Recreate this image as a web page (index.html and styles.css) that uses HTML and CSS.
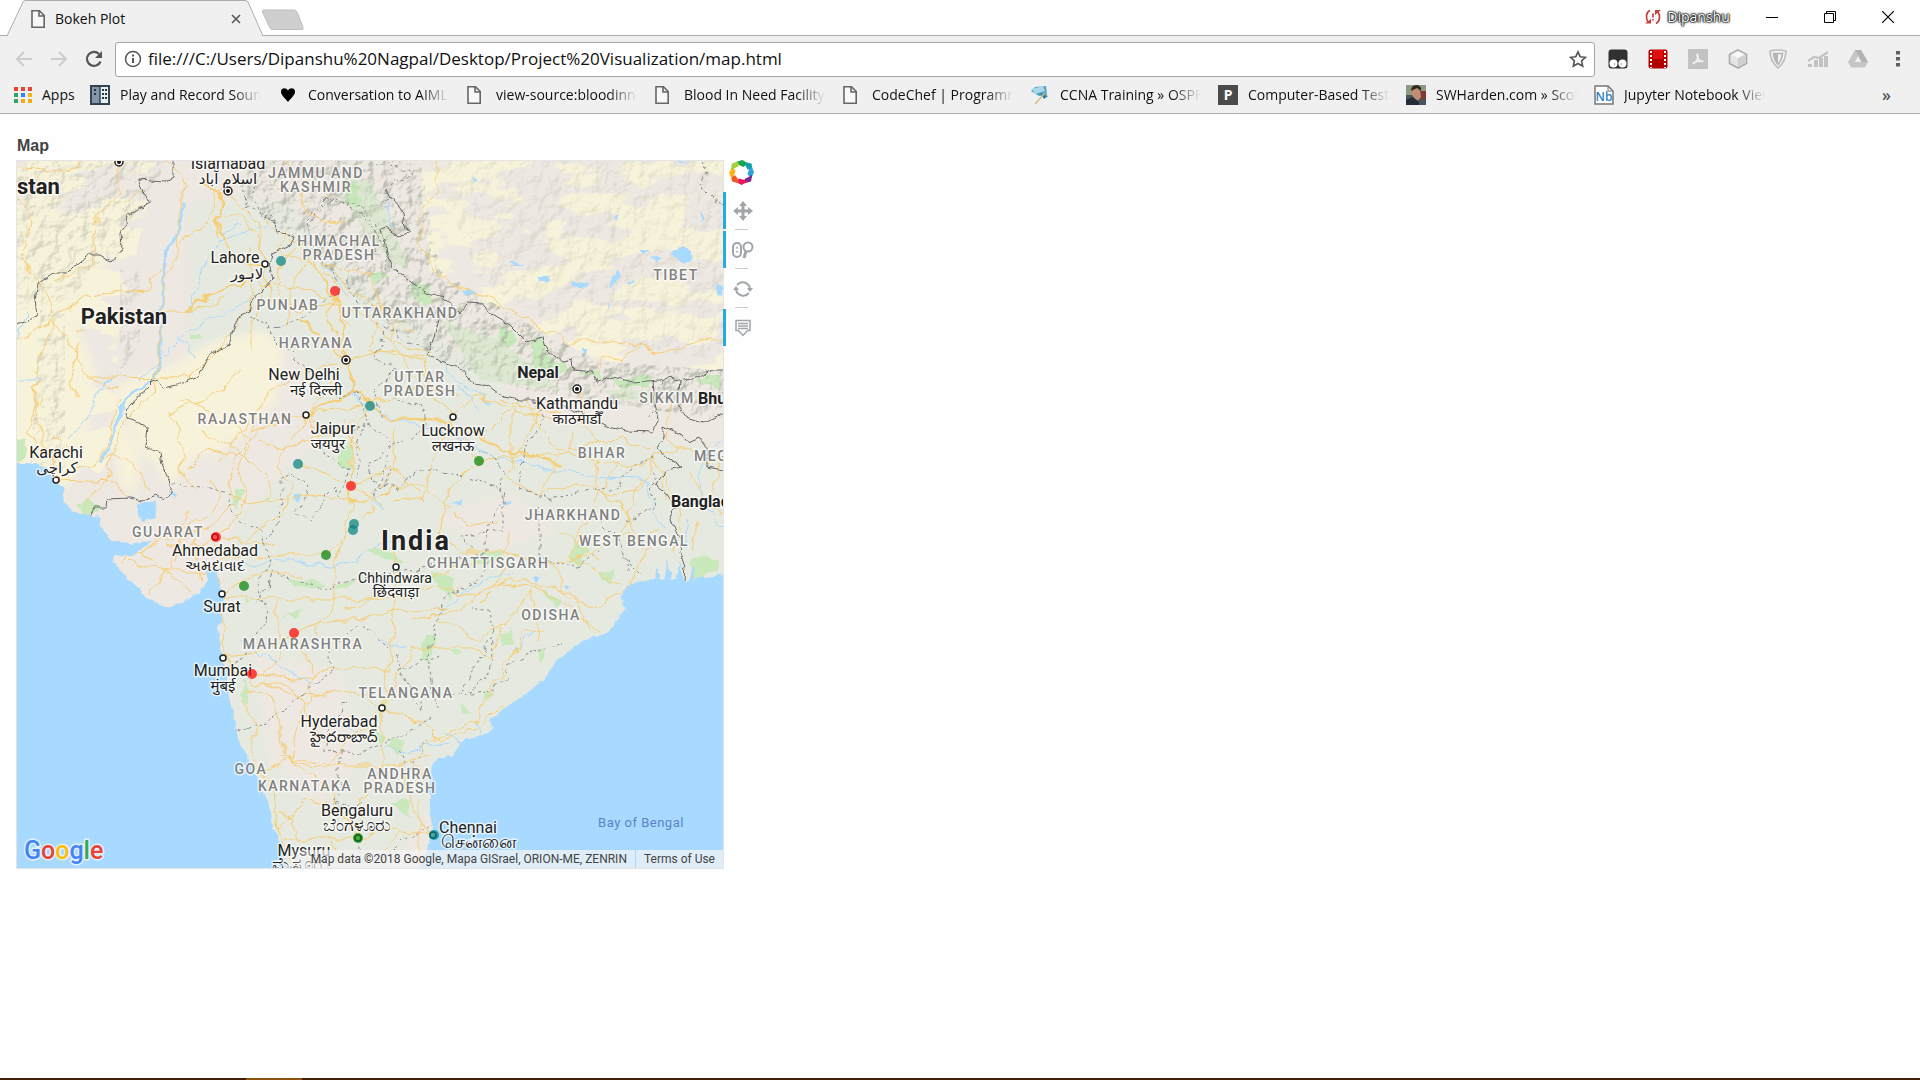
FILE: index.html
```html
<!DOCTYPE html>
<html lang="en">
<head>
<meta charset="utf-8">
<title>Bokeh Plot</title>
<link rel="stylesheet" href="styles.css">
</head>
<body>
<svg class="defs" width="0" height="0" aria-hidden="true">
  <symbol id="page" viewBox="0 0 16 20"><path d="M2 1.800h7.500l4.700 4.700v11.700H2zM9 2v5h5" fill="#fff" fill-opacity=".5" stroke="#666" stroke-width="1.600"/></symbol>
</svg>

<header class="browser">
  <div class="titlebar">
    <div class="tab">
      <svg class="tab-shape" width="257" height="36" viewBox="0 0 257 36" aria-hidden="true"><path d="M0 36 16 2Q17 .5 19 .5H238Q240 .5 241 2L256 36" fill="#f0f0f0" stroke="#adadad"/></svg>
      <svg class="tab-icon" width="16" height="20"><use href="#page"/></svg>
      <span class="tab-title">Bokeh Plot</span>
      <button class="tab-close" aria-label="Close tab"><svg width="10" height="10" viewBox="0 0 10 10"><path d="M1 1l8 8M9 1 1 9" stroke="#555" stroke-width="1.600"/></svg></button>
    </div>
    <button class="new-tab" aria-label="New tab"><svg width="44" height="22" viewBox="0 0 44 22"><path d="M2.500 1H33Q35 1 36 3l6 15q.6 2.500-1 2.500H11.500Q9.500 20.500 9 19L1.500 3Q1 1 2.500 1z" fill="#cfcfcf" stroke="#bdbdbd"/></svg></button>
    <div class="window-controls">
      <svg width="16" height="16" viewBox="0 0 16 16" aria-hidden="true"><g fill="none" stroke="#c5403a" stroke-width="1.700"><path d="M5 1.500C1 3 .5 9 3 13M11 14.500c4-2 4.500-8 2-11.500"/><path d="M8 4.500v4M8 10v1.500"/></g><path d="M0 14.500h6V10zM16 1h-6v5z" fill="#c5403a"/></svg>
      <button class="profile">Dipanshu</button>
      <button class="win" aria-label="Minimize"><svg width="12" height="12" viewBox="0 0 12 12"><path d="M0 6.500h12" stroke="#000"/></svg></button>
      <button class="win" aria-label="Restore"><svg width="12" height="12" viewBox="0 0 12 12"><path d="M.5 2.500h9v9h-9zM2.500 2.500v-2h9v9h-2" fill="none" stroke="#000"/></svg></button>
      <button class="win" aria-label="Close"><svg width="12" height="12" viewBox="0 0 12 12"><path d="M0 0l12 12M12 0 0 12" stroke="#000" stroke-width="1.200"/></svg></button>
    </div>
  </div>

  <div class="toolbar">
    <button class="nav" aria-label="Back"><svg width="18" height="18" viewBox="0 0 18 18"><path d="M17 9H2M9 2 2 9l7 7" fill="none" stroke="#ccc" stroke-width="2"/></svg></button>
    <button class="nav" aria-label="Forward"><svg width="18" height="18" viewBox="0 0 18 18"><path d="M1 9h15M9 2l7 7-7 7" fill="none" stroke="#ccc" stroke-width="2"/></svg></button>
    <button class="nav" aria-label="Reload"><svg width="18" height="18" viewBox="0 0 18 18"><path d="M15.500 11.500A7 7 0 1 1 14 4" fill="none" stroke="#555" stroke-width="2.200"/><path d="M17 1v7h-7z" fill="#555"/></svg></button>
    <div class="address">
      <svg width="18" height="18" viewBox="0 0 18 18" aria-hidden="true"><circle cx="9" cy="9" r="7.500" fill="none" stroke="#555" stroke-width="1.500"/><path d="M9 8v5M9 4.500v2" stroke="#555" stroke-width="2"/></svg>
      <input class="url" aria-label="Address" value="file:///C:/Users/Dipanshu%20Nagpal/Desktop/Project%20Visualization/map.html">
      <button class="star" aria-label="Bookmark this page"><svg width="18" height="18" viewBox="0 0 18 18"><path d="m9 1.800 2.200 4.900 5.300.6-3.900 3.600 1.100 5.300L9 13.500l-4.700 2.700 1.100-5.300L1.500 7.300l5.300-.6z" fill="none" stroke="#555" stroke-width="1.600"/></svg></button>
    </div>
    <div class="extensions">
      <button class="ext" aria-label="Tampermonkey"><svg width="20" height="20" viewBox="0 0 20 20"><rect x=".5" y=".5" width="19" height="19" rx="3" fill="#303030"/><circle cx="5.500" cy="14.500" r="4" fill="#fff"/><circle cx="14.500" cy="14.500" r="4" fill="#fff"/><circle cx="6.500" cy="15" r="1" fill="#bbb"/><circle cx="13.500" cy="15" r="1" fill="#bbb"/></svg></button>
      <button class="ext" aria-label="Video downloader"><svg width="20" height="20" viewBox="0 0 20 20"><rect x=".5" y=".5" width="19" height="19" rx="2" fill="#b80000"/><path d="M5 1h10v9H5z" fill="#e01010"/><path d="M5 10h10v9H5z" fill="#b00000"/><path d="M3 2v17M17 2v17" stroke="#fff" stroke-width="2" stroke-dasharray="2 2"/></svg></button>
      <button class="ext" aria-label="PDF"><svg width="20" height="20" viewBox="0 0 20 20"><path d="M0 0h20v20H0z" fill="#c2c2c2"/><path d="M5 15c4-2 6-7 4.500-10.500M9 5c0 5 3 7 6 7.500M4.500 14.500C8 12 11 12 15.500 12.500" fill="none" stroke="#f4f4f4" stroke-width="1.500"/></svg></button>
      <button class="ext" aria-label="Cube"><svg width="20" height="20" viewBox="0 0 20 20"><path d="m10 1 8.500 4.500v9L10 19l-8.500-4.500v-9z" fill="#e4e4e4" stroke="#aaa" stroke-width="1.600"/><path d="m10 9 7-3.500v8.500l-7 4z" fill="#cfcfcf"/><path d="m10 9-7-3.500L10 2l7 3.500z" fill="#f8f8f8"/></svg></button>
      <button class="ext" aria-label="Shield"><svg width="20" height="20" viewBox="0 0 20 20"><path d="M10 1c3 0 5 .2 8 1-.2 8-3 13-8 17C5 15 2.200 10 2 2c3-.8 5-1 8-1z" fill="#f2f2f2" stroke="#bbb" stroke-width="1.600"/><path d="M10 4.500h4.500C14 10 13 12 10 15.500 7 12 6 10 5.500 4.500z" fill="none" stroke="#b5b5b5" stroke-width="1.600"/><path d="M10 5v10C7 12 6 9 6 5z" fill="#b5b5b5"/></svg></button>
      <button class="ext" aria-label="Analytics"><svg width="20" height="20" viewBox="0 0 20 20"><path d="M0 15h4v3H0zM6 11h4v7H6zM11 9h4v9h-4zM16 7h4v11h-4z" fill="#c2c2c2"/><path d="m0 12 6-4 5 1 9-6" fill="none" stroke="#c2c2c2" stroke-width="2.200"/></svg></button>
      <button class="ext" aria-label="Drive"><svg width="20" height="20" viewBox="0 0 20 20"><path d="M7 1h6l7 12-3 5.500H3L0 13z" fill="#c6c6c6"/><path d="M7 1h6l7 12h-6z" fill="#b2b2b2"/><path d="m10 7 3 6H7z" fill="#f2f2f2"/></svg></button>
      <button class="menu" aria-label="Menu"><svg width="4" height="18" viewBox="0 0 4 18"><path d="M0 1h4v3.500H0zM0 7h4v3.500H0zM0 13h4v3.500H0z" fill="#5f5f5f"/></svg></button>
    </div>
  </div>

  <nav class="bookmarks">
    <a class="apps" href="#"><svg width="18" height="18" viewBox="0 0 18 18"><g><path d="M0 1h4v4H0zM7 1h4v4H7zM14 1h4v4h-4z" fill="#ee4035"/><path d="M0 7h4v4H0z" fill="#34a061"/><path d="M7 7h4v4H7z" fill="#2f86f6"/><path d="M14 7h4v4h-4z" fill="#f5b51c"/><path d="M0 13h4v4H0z" fill="#34a061"/><path d="M7 13h4v4H7zM14 13h4v4h-4z" fill="#f5a81c"/></g></svg>Apps</a>
    <div class="marks">
      <a class="mark" href="#"><svg width="20" height="20" viewBox="0 0 20 20"><path d="M1 1h18v18H1z" fill="#e9eef2" stroke="#33444f" stroke-width="2"/><path d="M2 2h8v16H2z" fill="#8497a8"/><path d="M10 1v18" stroke="#33444f" stroke-width="1.500"/><path d="M5 4v2M5 8v2M13 4v2M13 8v2M13 12v2M16 4v2M16 8v2M16 12v2" stroke="#26343e" stroke-width="2"/></svg><span>Play and Record Sound</span></a>
      <a class="mark" href="#"><svg width="20" height="20" viewBox="0 0 20 20"><path d="M10 17C6 12 3 10 3 6.500 3 3 8 2 10 5.500 12 2 17 3 17 6.500 17 10 14 12 10 17z" fill="#000"/></svg><span>Conversation to AIML</span></a>
      <a class="mark" href="#"><svg width="20" height="20"><use href="#page" width="16" height="20"/></svg><span>view-source:bloodinneed</span></a>
      <a class="mark" href="#"><svg width="20" height="20"><use href="#page" width="16" height="20"/></svg><span>Blood In Need Facility</span></a>
      <a class="mark" href="#"><svg width="20" height="20"><use href="#page" width="16" height="20"/></svg><span>CodeChef | Programming</span></a>
      <a class="mark" href="#"><svg width="20" height="20" viewBox="0 0 20 20"><path d="m1 6 4-4 11-1 1 9-8 1z" fill="#4fa3c7"/><path d="M2 4 13 1l2 5-10 3z" fill="#a9d8ea"/><path d="m10 8 8 3-4 3z" fill="#2b7ba5"/><path d="M15 8 5 19" stroke="#d9b97c" stroke-width="1.500"/></svg><span>CCNA Training » OSPF</span></a>
      <a class="mark" href="#"><svg width="20" height="20" viewBox="0 0 20 20"><path d="M0 0h20v20H0z" fill="#4b4b4b"/><text class="p-icon" x="10" y="15">P</text></svg><span>Computer-Based Test</span></a>
      <a class="mark" href="#"><svg width="20" height="20" viewBox="0 0 20 20"><path d="M0 0h20v20H0z" fill="#8b9c80"/><path d="M0 10h20v10H0z" fill="#4b5458"/><path d="M14 6h6v8h-6z" fill="#7d3a33"/><path d="M6 4q4-4 8 0l1 8q-3 5-6 3-4-4-3-11z" fill="#c08d72"/><path d="M5 6q0-6 6-6 5 1 4 6l-4-3z" fill="#33261f"/><path d="m0 15 7-3 6 5v3H0z" fill="#252c38"/></svg><span>SWHarden.com » Scott</span></a>
      <a class="mark" href="#"><svg width="20" height="20" viewBox="0 0 20 20"><path d="M1 1h13l5 5v13H1z" fill="#fff" stroke="#777" stroke-width="1.500"/><path d="M14 1v5h5" fill="none" stroke="#777"/><text class="nb-icon" x="10" y="16">Nb</text></svg><span>Jupyter Notebook Viewer</span></a>
    </div>
    <button class="more" aria-label="More bookmarks">»</button>
  </nav>
</header>

<main class="document">
  <section class="plot">
    <h1>Map</h1>
    <div class="figure">
      <div class="map">
        <svg class="canvas" viewBox="17 161 706 707" role="img" aria-label="Map of India">
          <defs>
            <filter id="wiggle" x="-5%" y="-5%" width="110%" height="110%" color-interpolation-filters="sRGB"><feTurbulence type="fractalNoise" baseFrequency=".06" numOctaves="2" seed="4"/><feDisplacementMap in="SourceGraphic" scale="14" xChannelSelector="R" yChannelSelector="G"/></filter>
            <filter id="wiggle-fine" x="-5%" y="-5%" width="110%" height="110%" color-interpolation-filters="sRGB"><feTurbulence type="fractalNoise" baseFrequency=".12" numOctaves="2" seed="9"/><feDisplacementMap in="SourceGraphic" scale="6" xChannelSelector="R" yChannelSelector="G"/></filter>
            <filter id="patch" color-interpolation-filters="sRGB"><feTurbulence type="fractalNoise" baseFrequency=".016 .035" numOctaves="4" seed="11"/><feColorMatrix values="0 0 0 0 .968 0 0 0 0 .949 0 0 0 0 .855 16 0 0 0 -7.300"/><feComposite in2="SourceGraphic" operator="in"/></filter>
            <filter id="relief" color-interpolation-filters="sRGB"><feTurbulence type="fractalNoise" baseFrequency=".07" numOctaves="4" seed="7"/><feDiffuseLighting surfaceScale="5" lighting-color="#fff"><feDistantLight azimuth="225" elevation="50"/></feDiffuseLighting><feColorMatrix values="0 0 0 0 .6 0 0 0 0 .62 0 0 0 0 .56 -2 0 0 0 1.550"/><feComposite in2="SourceGraphic" operator="in"/></filter>
            <filter id="soft"><feGaussianBlur stdDeviation="4"/></filter>
          </defs>
          <path d="M0 140h740v740H0z" fill="#a8d9fe"/>
          <mask id="land"><path filter="url(#wiggle-fine)" fill="#fff" d="M10 463H30L47 468 55 482 63 487 65 502 72 510 88 515 100 517V527L113 540 133 545 153 540 133 556 115 554 112 561 127 577 150 600 167 607 183 602 200 592 207 580 206 570H217L220 587 224 597 222 613 218 630 222 652 224 662 230 698 235 720 238 740 247 755 253 770 263 790 270 805 273 827 282 847 290 880H413L422 860 427 850 432 827 430 807V787L432 763 447 755 452 757 462 740 480 737 492 728 490 720 503 708 522 697 543 680 560 658 580 642 607 633 617 620 625 608 621 593 637 582 657 577 667 580 684 580 700 578 740 572V140H0z"/></mask>
          <g mask="url(#land)">
            <path d="M0 140h740v740H0z" fill="#ede8e1"/>
            <g filter="url(#soft)">
              <path d="M190 200l90 0 80 80 80 60 100 80 190 30v140l-70 20-140 110-100 100-30 60-120 0-30-130-20-120 20-130 80-60-20-90-60-10-40 70-50 60-10-30 50-70z" fill="#e5e9df"/>
              <path d="M0 220l50-20 60 60-40 50 25 60-10 90-30 40-70-10zM215 340l50-10 18 20-6 50-24 20-20 30-40 6-21 31-20-26-16-18-4-20-20-20 20-26 40-12z" fill="#f7f2da"/>
              <path d="M118 380l16 14-14 20 20 40-4 40-16-10-8-50z" fill="#f7f2da"/>
              <path d="M250 650l90 20 20 90-40 50-50-50z" fill="#ede8e1"/>
              <path d="M230 440l60 30-40 40-50-20zM430 520l80-30 50 40-60 20z" fill="#ede8e1"/>
            </g>
            <path d="M420 161h310v210l-130-10-100-50-70-40z" fill="#f7f2da" filter="url(#patch)"/>
            <path d="M17 161h140l-40 180 0 100-20 40H17z" fill="#f7f2da" filter="url(#patch)"/>
            <g fill="#c9e9bd" filter="url(#wiggle)">
              <path d="M345 183l12 2 6 12-4 10-14-2zM408 282l22 3 4 18-12 4-10-12zM498 324l12 3 6 14-6 8-10-10zM532 340l12-2 2 14 18 10 6 10-22 6-14-6zM580 375l14-4 8 8zM610 378h40v10h-30zM700 376h20l3 12-30-6zM370 275l14-2 6 6-16 2zM192 335l8 0 2 5-10 0z"/>
              <path d="M77 503l14-2 12 10-20 4zM10 440l16-2v18l-16 5zM233 487l7 0-1 22-6-8zM264 496l8 1-2 5-6-2zM338 452l14-10-2 26-12-4zM290 578l34 4-10 8-22-2zM336 588l18-8-6 10zM366 548l20 2 20 14-26-4zM243 597l7 4-4 6zM280 618l26-8-10 8z"/>
              <path d="M433 569l22 6-5 26-12-12zM470 556l26-6 10 6-20 10zM575 540l14 6-6 20-13-6zM600 573l13-6-2 16-9-3zM545 590l16 10-6 10zM690 560l30-4v16l-28 4zM424 635l10 0-4 30-8-6zM500 635l10-8 6 20-14 0zM538 648l8 0-2 14-6-4zM480 690l15 4-12 6zM463 705l10 4-12 6zM388 740l20 0-10 14zM393 800l14 0 4 18-14-8zM243 683l6 4-2 20-5-4zM450 650l12 2-10 4z"/>
              <path d="M387 745l18 4-8 8zM372 725l12 14-4 4-10-12z"/>
            </g>
            <path d="M240 161h180l20 110 100 60 60 30 130 10v50l-70-10-130-20-90-30-70-50-60-60-40-30-30-30z" fill="#fff" filter="url(#relief)" opacity=".55"/>
            <path d="M17 161h150l-40 80-60 60-50 10zM40 310h25v160H30zM120 270h20v80l-20 20z" fill="#fff" filter="url(#relief)" opacity=".3"/>
            <path d="M430 161h300v200l-150-20-100-60z" fill="#fff" filter="url(#relief)" opacity=".16"/>
            <path d="M340 171l30 10 20 40 20 50-20-10-40-50zM440 320l60 20 60 50-80-10zM600 390l50 0 10 12-40-2z" fill="#c3e4b8" opacity=".35"/>
            <g fill="#a8d9fe" filter="url(#wiggle-fine)">
              <path d="M671 254l6-6 8-2 6 6 2 8-8 4-6-4zM572 281l18 3-2 5-16-2zM536 276l14 0-2 5-8 0zM610 284l8-14 3 6-11 12zM508 261l6 0 11 5-12 0zM640 250l8 0-4 4zM650 258l14-2-8 5zM625 282l10-2-4 5zM676 161l12 1-8 2zM716 285l7 0-1 12-5-2zM702 211l2 6-3 4zM463 291l10-2 2 5-8 2zM582 348l4 0-1 8zM614 216l5 0-2 5zM470 177l8 4-4 1zM608 305l2 0-1 6z"/>
              <path d="M137 503l20 0-2 14-13 3-5-8zM168 488l8 8-2 3zM294 495l8-2-4 10-6-4zM450 505l14-6-4 5zM504 502l8-1-5 4zM533 577l8 0-4 5zM564 585l6 1-4 4z"/>
              <path d="M655 580l2-14 3 14zM664 582l4-24 3 24zM676 582l4-20 3 20zM690 580l3-16 2 14z"/>
            </g>
            <g class="river" filter="url(#wiggle)">
              <path class="wide" d="M162 352v-60l4-40 14-30 4-20M162 352l-6 25-26 16-18 40-10 30"/>
              <path class="thin" d="M268 224l-44 16-20 20-4 22-10 30M250 300l-60 30-50 50M240 225l-20 8M310 245l24 30 14 20M346 360l12 40 20 12 80 24 40 24 60 10 40 8 50 4 6 30 10 16M440 360l30 30 20 14M460 385l20 28M723 440l-20 18-4 36 14 24 10 10M690 520l-4 30M440 612l24-20 20-12 30-8M220 570l60-10 56 8 60-30M240 640l60 40 16 4M405 650l-20-10M380 745l20 8 50-10M360 740l-20-20M475 720l6 14M196 355l-20-18M376 490l4 20M387 195l6 30M444 730l18 14M515 650l20-20M17 340l10-30M70 440l30-50 20-20M20 380h20"/>
            </g>
            <g class="road" filter="url(#wiggle)">
              <path class="major" d="M205 182l18 18-6 20 14 40 30 6M300 320l46 40M216 220l2 20M185 310l15-10 50-20M310 260l28 44 8 56 10 30 30 28 66 2 50 30 60 14M356 390l-50 25M224 658l16 20 14-4"/>
              <path d="M20 165l40 8 26-12M119 162v30l-26 30 2 40-40 20M143 192l-20 10M17 200l14 20-6 36 4 16M27 262l24 40 4 20 20 30 12 26 30 10M17 340l36-20 32-26 60-4 20-26M58 320l-22 40-2 40 20 70M90 377l100 1 30-30 30-40V248M75 330l10 0M165 160l20 24-10 50 4 26-16 20v30l-2 40-6 40-30 30-20 60-20 30-5 15M178 240l30-14 6-30 20-18M214 217l26-4 18 30 5 22 10 46M230 195l26 26 8 46M155 310l30 0 40-10M100 460l20-60M75 455l-20-20M56 480l60 2 14 16M56 480l50-24 24 4 20 30M40 400l-14 30 20 20M80 340l-10 40 10 20"/>
              <path d="M290 230l-16 20 24 10 30 16 20 20M281 261l-4 30 18 20 40-8 12 20M300 240l-20 30M260 285l50 4 30 14M310 250l-16 38-8 40M335 291l-6 30 17 39M348 310l26 10 30 40 14 20 35 37M380 320l-10 30 60 10M346 360l46-10 30 12M346 360l-50 16-30 20-14 36 54-17 60-10M252 350v-30l10-40M240 370l-36 30-34 14 14 30-4 22 14 24M346 360l-20 30-20 26 20 30 20-26M283 415l-26 20-20 20-30-6-20 20M237 455l-10 40 20 10 60-10 60 6 30-30-2-40M240 500l-20 20-40 20-4 20M210 480l10 20-20 20-60 30M216 537l30-30-6-30 10-36-20-20M306 415l-30 50 16 20-10 30-40 28-26-6M216 537l-30 14-20-6M216 537l6 60 2 60M130 560l30 10 50 0M140 550l50 40M190 510l-20 30-30 10-20 12M150 595l20-30 10-30M195 540l6 40"/>
              <path d="M370 406l-18 30-2 50-2 40-14 40 0 40-20 30M298 464l52 20 30 20M306 415l30 20 20-16M354 526l-30 30-60 0-44 0M354 526l20-20 20-20 30 0 24 20 20 20 30-6M276 545l-50-6M222 595l70 4 62 0 40 0 40-12 40 10 40-20M278 600v60l-20 20M222 594l30-20 50 0M294 633l30-10 70-10 60-6M294 633l-40 20-30 5M223 658l30 26 40 0 20 40 6 20M294 633l20 40-6 30-14 30-4 26M252 674l50 6 30-12 60 2M392 540l4 50-4 50-10 68M396 590l-50 20M480 604l20-20 40 4 20 14 40 30M382 708l-30-20-40 10-50-14M382 708l40 14 20 20 20-10 20-6 20-20M382 708v60l-20 30-4 40M382 708l30-60 60 0 20 10 10-30M382 708l-60 60-40-10M240 700l14 20 0 40 20 30 4 40 10 30M265 770l30-12 50 8 60 0M285 758l-10-60-30-10M358 838l-40 0-34 0M358 838l36-10 38 8M358 838l-20-30-30-8-30 30M358 838l-30-50-40-30M432 790l-20-30 24-20 40-20 20-40 20-30 10-20 20 0M430 835l-20-30-10-40 30-10M420 800v60M400 830l-20 30M300 840l-20-30M330 838l10 24"/>
              <path d="M453 417l-20-20-10-36M453 417l20-20 40 10 0 60M453 417l-20 40-10 40-30 4M453 417l26 44 50-4 40-4 70 14 40-20M479 461l-30 30-10 40 20 20 40 0 40 10 50-4 20-20 50-4M528 400l10 30 20 20 60-10 40 10M543 405l-20 40-20 30 30 20 50-10 40 20 20 50M500 400l40 10 40 6 20 30M577 389l10 30M560 455l-20 40M600 455l-10 60-20 40 30 20 20 10M620 460l-20 34 40-4 14-30 12 40M660 470l20 40-4 40M670 400l-4 40 40 20 17-4M690 470l10 30 20 14M700 520l-10 30M720 460l-10 40M510 530l-10 50-40 30-50 10M510 580l60 10 20 40M440 620l40 20 30-20 20-30M480 560l-70 20M550 560l20 40 30 6 30-20 20-40M540 640l-10-50M600 560l-40-30M640 480l-20 60M573 432l-4 22M480 440l30-30M553 420l-40-10M424 500l-30-30-40 12"/>
              <path d="M438 161l0 30-16 14 0 40 8 20 20 18 36 14 40 22 40 22 30 0 40 4 24 8 30-8 20-8h50M640 345l-16 16-20-6-6 20M370 405l50-20 40 10M263 216l26 24 30 16M283 155l10 30 20 30 30 10M300 200l10-20 20 20M310 250l30 20 30 4 14 40 30 20M320 256l30 34 40 20 0 30 40 14M260 440l20 10 60-20 20 20M250 420l-30 40M200 430l40 20 30 30 0 20M180 400l30 10"/>
            </g>
            <g class="state" filter="url(#wiggle)">
              <path d="M172 486l30 2 26 8 10 24 24 14 8 30-10 20 8 30-20 34-8 14-22 6M262 543l14-14 6-30 0-20 12-6 14 14-10 26 12 8 16-24 10-10 6 10 6-30-24-14 4-30M260 600l12-28 38 14 22 2 30-12 30-4 36-6 30-8 26-4 8-36 14-24-20-12-60-14-30 20-24-6-4-20 30-16 30-20-10-22-24-4 4-30-20-10 8-40M268 328l34-8 18-10 18-24-8-20-20-26-4-20 20-20 30 4 20 20 0 30M345 280l24 36 20 14 40 20"/>
              <path d="M250 316l20 6 2 14 30 30 36 30 20-4 10 30-12 22 0 34M395 370l-20 20 8 30M353 430l20-6 20 24-10 30-10 24 20-30M438 430l60 30 6 40 0 30-34 4-10 4 30 24-14 20-30 14-16 50-2 20 10 40M520 490l4-40 20-30-12-20M520 490l30 10 30-6 40-10 14-18 20-6M625 520l30-10-4-40M600 520l20 20 10 24 12 12M540 506l0 50 40 10 20-14M620 540l10 30M470 610l20 0 4 26-14 20-20 40-10 0M494 640l-6 36-24 20 30-6 20-30 20-10 30-8M440 655l-20 6-20 10 10 20 10 0-2 20-24-60-34-30-30 30 4 20-40 30-20 16-50 20-6 30-14 24M352 700l-20 20-10 30 40 2 40-16 30-20M340 750l0 30-6 20 20 10 10-8M400 750l10 20 20-30M384 860l20-20 30-14M360 810l0 50"/>
              <path d="M260 161l-8 30 6 20 20 12M243 178l4 30 20 10M310 220l10-12 16-10 20 12 20 20 10 20 0 30M390 165l16 4 6 8-18 4-10 20M380 165l20-8M700 161l6 12-6 12 12 12 14 10M662 380l-14 40"/>
            </g>
            <g class="border" filter="url(#wiggle-fine)">
              <path d="M173 155v22l-8 5-27-2 5 12 7 10-12 8-10 5-1 10-6 8 1 17-10 12-12-7H90l-17 12-6 6H53l-15 10-3 17 2 17-20 8"/>
              <path d="M263 217L275 223 277 232 295 237 290 245 272 253 270 267 273 278 262 290 253 300 250 312 238 317 227 347 210 353 197 378 177 385 163 388 158 380 152 382 128 407 127 418 147 427 145 447 160 453 162 465 172 487V493L163 499 157 495 143 501 130 498 107 499 106 507H95L90 517"/>
              <path d="M385 190L403 212 405 227 412 230 398 237 385 228 380 230 387 250 392 267 408 280 427 293 443 298 460 314 467 302 483 303 490 313 510 325 527 342 543 338 547 350 563 362 572 360 573 370 593 372 597 382 613 377 633 382 660 380 672 377 680 382 700 377 713 370H730"/>
              <path d="M440 315L433 340 428 353 440 362 460 368 475 385 490 387 503 397 520 400H543L560 405 590 417 607 427 627 431 653 432 658 420 655 403 653 380M680 382L677 403 687 417 703 422 725 413M663 427L682 435 688 443 700 438 707 448V467L725 470M663 427V437L657 447 667 458 682 467 667 470 655 485 667 495 675 508 670 517 675 530 682 540 680 553 685 567 684 580"/>
            </g>
          </g>
          <g class="capital"><circle cx="119" cy="162" r="4"/><circle cx="228" cy="191" r="4"/><circle cx="346" cy="360" r="4"/><circle cx="577" cy="389" r="4"/></g>
          <g class="core"><circle cx="119" cy="162" r="2"/><circle cx="228" cy="191" r="2"/><circle cx="346" cy="360" r="2"/><circle cx="577" cy="389" r="2"/></g>
          <g class="city"><circle cx="265" cy="264" r="3"/><circle cx="306" cy="415" r="3"/><circle cx="453" cy="417" r="3"/><circle cx="56" cy="480" r="3"/><circle cx="222" cy="594" r="3"/><circle cx="223" cy="658" r="3"/><circle cx="382" cy="708" r="3"/><circle cx="396" cy="567" r="3"/><circle cx="215" cy="537" r="3"/><circle cx="358" cy="838" r="3"/><circle cx="433" cy="835" r="3"/></g>
          <g class="label nation">
            <text class="start" x="17" y="194">stan</text><text x="124" y="324">Pakistan</text><text class="india" x="416" y="550">India</text>
            <g class="small"><text x="538" y="378">Nepal</text><text class="start" x="698" y="404">Bhutan</text><text class="start" x="671" y="507">Bangladesh</text></g>
          </g>
          <g class="label region">
            <text x="316" y="178">JAMMU AND</text><text x="316" y="192">KASHMIR</text><text x="339" y="246">HIMACHAL</text><text x="339" y="260">PRADESH</text><text x="676" y="280">TIBET</text><text x="288" y="310">PUNJAB</text><text x="400" y="318">UTTARAKHAND</text><text x="316" y="348">HARYANA</text><text x="420" y="382">UTTAR</text><text x="420" y="396">PRADESH</text><text x="245" y="424">RAJASTHAN</text><text x="667" y="403">SIKKIM</text><text x="602" y="458">BIHAR</text><text class="start" x="694" y="461">MEGHALAYA</text><text x="168" y="537">GUJARAT</text><text x="488" y="568">CHHATTISGARH</text><text x="573" y="520">JHARKHAND</text><text x="634" y="546">WEST BENGAL</text><text x="551" y="620">ODISHA</text><text x="303" y="649">MAHARASHTRA</text><text x="406" y="698">TELANGANA</text><text x="251" y="774">GOA</text><text x="305" y="791">KARNATAKA</text><text x="400" y="779">ANDHRA</text><text x="400" y="793">PRADESH</text>
          </g>
          <g class="label town">
            <text x="228" y="169">Islamabad</text><text x="228" y="184" class="local">اسلام آباد</text>
            <text x="235" y="263">Lahore</text><text x="247" y="279" class="local">لاہور</text>
            <text x="304" y="380">New Delhi</text><text x="316" y="395" class="local">नई दिल्ली</text>
            <text x="333" y="434">Jaipur</text><text x="328" y="449" class="local">जयपुर</text>
            <text x="453" y="436">Lucknow</text><text x="453" y="451" class="local">लखनऊ</text>
            <text x="577" y="409">Kathmandu</text><text x="577" y="424" class="local">काठमाडौँ</text>
            <text x="56" y="458">Karachi</text><text x="57" y="473" class="local">کراچی</text>
            <text x="215" y="556">Ahmedabad</text><text x="215" y="571" class="local">અમદાવાદ</text>
            <text class="minor" x="395" y="583">Chhindwara</text><text x="396" y="597" class="local">छिंदवाड़ा</text>
            <text x="222" y="612">Surat</text>
            <text x="223" y="676">Mumbai</text><text x="223" y="691" class="local">मुंबई</text>
            <text x="339" y="727">Hyderabad</text><text x="344" y="742" class="local">హైదరాబాద్</text>
            <text x="357" y="816">Bengaluru</text><text x="357" y="831" class="local south">ಬೆಂಗಳೂರು</text>
            <text x="304" y="856">Mysuru</text><text x="300" y="870" class="local south">ಮೈಸೂರು</text>
            <text x="468" y="833">Chennai</text><text x="478" y="848" class="local south">சென்னை</text>
          </g>
          <text class="sea" x="641" y="827">Bay of Bengal</text>
          <g class="dot teal"><circle cx="281" cy="261" r="5"/><circle cx="370" cy="406" r="5"/><circle cx="298" cy="464" r="5"/><circle cx="354" cy="524" r="5"/><circle cx="353" cy="530" r="5"/><circle cx="434" cy="835" r="5"/></g>
          <g class="dot red"><circle cx="335" cy="291" r="5"/><circle cx="351" cy="486" r="5"/><circle cx="216" cy="537" r="5"/><circle cx="294" cy="633" r="5"/><circle cx="252" cy="674" r="5"/></g>
          <g class="dot green"><circle cx="479" cy="461" r="5"/><circle cx="326" cy="555" r="5"/><circle cx="244" cy="586" r="5"/><circle cx="358" cy="838" r="5"/></g>
          <text class="google" x="24" y="859"><tspan class="b">G</tspan><tspan class="r">o</tspan><tspan class="y">o</tspan><tspan class="b">g</tspan><tspan class="g">l</tspan><tspan class="r">e</tspan></text>
        </svg>
        <footer class="credit"><span>Map data ©2018 Google, Mapa GISrael, ORION-ME, ZENRIN</span><a href="#">Terms of Use</a></footer>
      </div>
      <div class="tools">
        <a class="logo" href="#" aria-label="Bokeh"><svg width="25" height="25" viewBox="-50 -50 100 100"><g stroke-linejoin="round"><path d="M-24-42 4-50 26-36 8-22-6-28z" fill="#17a54a"/><path d="M12-42 40-36 44-12 24-12 18-24z" fill="#0fa0a8"/><path d="M40-26 50 0 38 20 24 8 28-6z" fill="#27a4e0"/><path d="M44 8 38 36 14 42 12 26 28 18z" fill="#7a2a8c"/><path d="M26 36 0 50-22 38-10 24 6 28z" fill="#ed155b"/><path d="M-10 44-38 36-42 12-24 12-16 24z" fill="#f15a24"/><path d="M-40 26-50 0-36-20-24-8-28 6z" fill="#fbb016"/><path d="M-44-8-38-36-14-44-10-26-26-18z" fill="#a5cf3a"/></g></svg></a>
        <button class="tool on" aria-label="Pan"><svg width="20" height="20" viewBox="0 0 20 20"><path d="M10 3v14M3 10h14" stroke="#a1a6a9" stroke-width="3"/><path d="m10 0 4 5H6zM10 20l4-5H6zM0 10l5-4v8zM20 10l-5-4v8z" fill="#a1a6a9"/></svg></button>
        <button class="tool on" aria-label="Wheel Zoom"><svg width="22" height="18" viewBox="0 0 22 18"><g fill="none" stroke="#a1a6a9" stroke-width="2"><rect x="1" y="2" width="8" height="14" rx="4"/><circle cx="16" cy="6" r="4.500"/><path d="m14 10-2 7" stroke-width="3"/></g><path d="M3.500 7.500h3L5 5.500zM3.500 10h3L5 12z" fill="#a1a6a9"/></svg></button>
        <button class="tool" aria-label="Reset"><svg width="20" height="18" viewBox="0 0 20 18"><path d="M4 5a7.500 7.500 0 0 1 13 3M16 13A7.500 7.500 0 0 1 3 10" fill="none" stroke="#a1a6a9" stroke-width="2"/><path d="M14 8h6l-3 4zM0 10h6L3 6z" fill="#a1a6a9"/></svg></button>
        <button class="tool on" aria-label="Hover"><svg width="18" height="18" viewBox="0 0 18 18"><path d="M2 1.500h14v10h-2.500L9 16.500l-4.500-5H2z" fill="none" stroke="#a1a6a9" stroke-width="1.500"/><path d="M4 4.500h10M4 7h10M4 9.500h10" stroke="#a1a6a9" stroke-width="1.500"/></svg></button>
      </div>
    </div>
  </section>
</main>
<div class="taskbar"><i></i></div>
</body>
</html>
```
FILE: styles.css
```css
* { box-sizing: border-box; }
body {
  margin: 0;
  min-height: 100vh;
  display: flex;
  flex-direction: column;
  background: #fefefe;
  font: 15px/20px "Open Sans", "Noto Sans", sans-serif;
  color: #111;
}
button { display: flex; align-items: center; justify-content: center; padding: 0; border: 0; background: none; font: inherit; color: inherit; }
a { color: inherit; text-decoration: none; }
svg { display: block; flex: none; }
.defs { position: absolute; }

.browser { background: #f0f0f0; border-bottom: 1px solid #adadad; }
.titlebar { display: flex; height: 36px; padding-left: 7px; background: #fff; box-shadow: inset 0 -1px #adadad; }
.tab { position: relative; display: flex; align-items: center; width: 257px; padding: 2px 23px 0 23px; }
.tab-shape { position: absolute; left: 0; top: 0; }
.tab-icon, .tab-title, .tab-close { position: relative; }
.tab-title { flex: 1; padding-left: 9px; font-size: 14px; }
.new-tab { width: 44px; margin-left: -3px; padding-top: 3px; }
.window-controls { display: flex; align-items: center; margin-left: auto; padding: 0 3px 3px 0; }
.profile { width: 59px; margin: 0 15px 0 8px; color: #fff; font-size: 14px; text-shadow: 0 0 1px #000, 0 0 1px #000, 0 0 2px #000, 0 0 2px #000, 0 0 3px #555; }
.win { width: 58px; height: 32px; }

.toolbar { display: flex; align-items: center; height: 44px; padding: 2px 12px 0 15px; }
.nav { width: 18px; margin-right: 17px; }
.nav:nth-child(3) { margin-right: 12px; }
.address { display: flex; flex: 1; align-items: center; height: 35px; padding: 0 7px 0 8px; background: #fff; border: 1px solid #a6a6a6; border-radius: 3px; }
.url { flex: 1; min-width: 0; padding: 0 0 0 6px; border: 0; outline: 0; background: none; font: 17px/24px "Open Sans", sans-serif; color: #111; }
.extensions { display: flex; gap: 20px; padding-left: 13px; align-items: center; }
.menu { width: 20px; }

.bookmarks { display: flex; align-items: center; height: 33px; padding: 0 29px 4px 14px; font-size: 14px; }
.apps { display: flex; align-items: center; gap: 10px; width: 76px; }
.marks { display: flex; gap: 17px; overflow: hidden; }
.mark { display: flex; align-items: center; gap: 10px; width: 171px; }
.mark span { flex: 1; overflow: hidden; white-space: nowrap; -webkit-mask-image: linear-gradient(90deg, #000 80%, transparent); mask-image: linear-gradient(90deg, #000 80%, transparent); }
.more { margin-left: auto; font-size: 16px; font-weight: 600; color: #555; }
.p-icon { font: 700 14px "Noto Sans", sans-serif; fill: #fff; text-anchor: middle; }
.nb-icon { font: 600 12px "Open Sans", sans-serif; fill: #2f7fc0; text-anchor: middle; }

.document { flex: 1; padding: 20px 16px; }
.plot { width: max-content; }
h1 { margin: 0; height: 26px; padding-left: 1px; font: 700 16px/24px "Liberation Sans", Arial, sans-serif; color: #444; }
.figure { display: flex; align-items: flex-start; }
.map { position: relative; border: 1px solid #e5e5e5; }
.canvas { width: 706px; height: 707px; }
.credit { position: absolute; right: 0; bottom: 0; display: flex; height: 18px; font: 12px/18px Roboto, sans-serif; color: #444; }
.credit span { padding: 0 8px 0 24px; margin-right: 1px; background: linear-gradient(90deg, rgba(245,245,245,0), rgba(245,245,245,.7) 30px); }
.credit a { padding: 0 8px 0 8px; background: rgba(245,245,245,.7); }

.river { fill: none; stroke: #a8d9fe; }
.river .wide { stroke-width: 3; }
.river .thin { stroke-width: 1; }
.road { fill: none; stroke: #f6cd72; stroke-width: 1; }
.road .major { stroke-width: 2; }
.state { fill: none; stroke: #8d8d8d; stroke-width: 1; stroke-dasharray: 3 3; }
.border { fill: none; stroke: #666; stroke-width: 1; }
.city circle, .capital circle { fill: #fff; stroke: #222; stroke-width: 1.5px; }
.core circle { fill: #111; }
.label, .sea, .google { text-anchor: middle; paint-order: stroke; stroke-linejoin: round; stroke-width: 3px; font-family: Roboto, "Noto Sans", "DejaVu Sans", sans-serif; }
.label { stroke: rgba(255,255,255,.7); }
.label .start { text-anchor: start; }
.nation { font-size: 22px; font-weight: 700; fill: #222; }
.nation .small { font-size: 16px; }
.nation .india { font-size: 27px; letter-spacing: 2px; }
.region { font-size: 14px; font-weight: 500; letter-spacing: 1.5px; fill: #808080; }
.town { font-size: 16px; fill: #222; }
.town .minor { font-size: 14px; }
.town .local { font-size: 15px; }
.town .south { font-size: 18px; }
.sea { font-size: 13px; fill: #5b82c9; stroke: none; letter-spacing: .5px; }
.dot { fill-opacity: .7; }
.teal { fill: #008080; }
.red { fill: #ff0000; }
.green { fill: #008000; }
.google { font: 500 25px Roboto, sans-serif; text-anchor: start; stroke: #e4f1fb; }
.b { fill: #4285f4; }
.r { fill: #ea4335; }
.y { fill: #fbbc05; }
.g { fill: #34a853; }

.tools { display: flex; flex-direction: column; width: 36px; margin-left: -1px; }
.logo { height: 32px; padding-left: 6px; }
.tool { position: relative; height: 37px; margin-bottom: 2px; border-left: 3px solid transparent; }
.tool.on { border-left-color: #26aae1; }
.tool + .tool::before { content: ""; position: absolute; left: 9px; top: -2px; width: 13px; height: 1px; background: #ccc; }

.taskbar { height: 2px; padding-left: 246px; background: #3f2000; }
.taskbar i { display: block; width: 56px; height: 2px; background: #8f5310; }
```
